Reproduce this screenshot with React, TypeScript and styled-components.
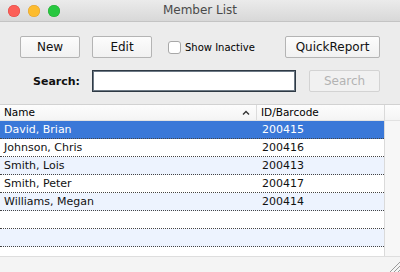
import React from "react";
import styled, { createGlobalStyle } from "styled-components";

const GlobalStyle = createGlobalStyle`
  html, body {
    margin: 0;
    padding: 0;
    background: #ececec;
  }
  body {
    font-family: "DejaVu Sans", "Liberation Sans", sans-serif;
    color: #1a1a1a;
  }
`;

const Window = styled.div`
  width: 400px;
  height: 272px;
  display: flex;
  flex-direction: column;
  background: #ececec;
  overflow: hidden;
`;

const TitleBar = styled.div`
  height: 21px;
  flex: none;
  display: flex;
  align-items: center;
  position: relative;
  background: linear-gradient(#ebebeb, #d8d8d8);
  border-bottom: 1px solid #c4c4c4;
`;

const Lights = styled.div`
  display: flex;
  gap: 8px;
  padding-left: 8px;
  padding-top: 1px;
`;

const Light = styled.span<{ $color: string; $edge: string }>`
  width: 12px;
  height: 12px;
  border-radius: 50%;
  background: ${(p) => p.$color};
  box-shadow: inset 0 0 0 0.5px ${(p) => p.$edge};
`;

const Title = styled.div`
  position: absolute;
  left: 0;
  right: 0;
  top: 0;
  line-height: 21px;
  text-align: center;
  font-size: 12px;
  color: #4a4a4a;
  pointer-events: none;
`;

const Toolbar = styled.div`
  display: flex;
  flex-direction: column;
  padding: 14px 20px 0 20px;
  gap: 12px;
  height: 82px;
  box-sizing: border-box;
  flex: none;
`;

const Row = styled.div`
  display: flex;
  align-items: center;
  height: 22px;
`;

const Button = styled.button<{ $w: number; $disabled?: boolean }>`
  width: ${(p) => p.$w}px;
  height: 22px;
  box-sizing: border-box;
  border: 1px solid ${(p) => (p.$disabled ? "#d3d3d3" : "#b4b4b4")};
  border-radius: 2px;
  background: ${(p) =>
    p.$disabled ? "#f1f1f1" : "linear-gradient(#fcfcfc, #f1f1f1)"};
  color: ${(p) => (p.$disabled ? "#b3b3b3" : "#111")};
  font-family: "DejaVu Sans", sans-serif;
  font-size: 12px;
  padding: 0;
  margin: 0;
`;

const Check = styled.span`
  width: 13px;
  height: 13px;
  box-sizing: border-box;
  border: 1px solid #a8a8a8;
  border-radius: 3px;
  background: #fff;
  margin-left: 16px;
`;

const CheckLabel = styled.span`
  font-size: 10px;
  margin-left: 4px;
  color: #000;
`;

const Spacer = styled.div`
  flex: 1;
`;

const SearchLabel = styled.label`
  width: 60px;
  text-align: right;
  font-weight: bold;
  font-size: 11px;
  color: #111;
  margin-right: 12px;
`;

const Input = styled.div`
  width: 204px;
  height: 22px;
  box-sizing: border-box;
  border: 1px solid #2f3a45;
  box-shadow: inset 0 0 0 1px #6d7985;
  background: #fff;
  margin-right: 13px;
`;

const Table = styled.div`
  flex: 1;
  display: flex;
  flex-direction: column;
  border-top: 1px solid #d2d2d2;
`;

const Body = styled.div`
  flex: 1;
  display: grid;
  grid-template-columns: 385px 1fr;
`;

const Columns = styled.div`
  background: #fff;
  border-right: 1px solid #dadada;
  display: flex;
  flex-direction: column;
`;

const Header = styled.div`
  height: 15px;
  display: grid;
  grid-template-columns: 257px 1fr;
  background: linear-gradient(#fdfdfd, #f4f4f4);
  border-bottom: 1px solid #e2e2e2;
  font-size: 10.5px;
  line-height: 15px;
  color: #000;
`;

const HeadCell = styled.div<{ $sep?: boolean }>`
  padding-left: 4px;
  display: flex;
  align-items: center;
  justify-content: space-between;
  border-right: ${(p) => (p.$sep ? "1px solid #dcdcdc" : "none")};
`;

const SortMark = styled.svg`
  margin-right: 6px;
`;

const DataRow = styled.div<{ $selected?: boolean; $alt?: boolean }>`
  height: 17px;
  display: grid;
  grid-template-columns: 258px 1fr;
  font-size: 11px;
  line-height: 17px;
  background: ${(p) => (p.$selected ? "#3a78d8" : p.$alt ? "#edf3fe" : "#fff")};
  color: ${(p) => (p.$selected ? "#fff" : "#111")};
  border-bottom: 1px dotted #444;
`;

const Cell = styled.div`
  padding-left: 4px;
  white-space: nowrap;
`;

const Scroller = styled.div`
  background: #f7f7f7;
  display: flex;
  flex-direction: column;
`;

const ScrollHead = styled.div`
  height: 15px;
  background: linear-gradient(#fdfdfd, #f4f4f4);
  border-bottom: 1px solid #e2e2e2;
`;

const Footer = styled.div`
  height: 15px;
  flex: none;
  background: #f4f4f4;
  border-top: 1px solid #dedede;
  display: flex;
  justify-content: flex-end;
  align-items: flex-end;
`;

const members = [
  { name: "David, Brian", id: "200415" },
  { name: "Johnson, Chris", id: "200416" },
  { name: "Smith, Lois", id: "200413" },
  { name: "Smith, Peter", id: "200417" },
  { name: "Williams, Megan", id: "200414" },
  { name: "", id: "" },
  { name: "", id: "" },
];

function Grip() {
  return (
    <svg width="11" height="11" viewBox="0 0 11 11">
      <path d="M1 11 L11 1 M5 11 L11 5 M9 11 L11 9" stroke="#9a9a9a" strokeWidth="1" />
    </svg>
  );
}

export default function App() {
  return (
    <Window>
      <GlobalStyle />
      <TitleBar>
        <Lights>
          <Light $color="#fc5f57" $edge="#df4744" />
          <Light $color="#fdbc2e" $edge="#de9f34" />
          <Light $color="#28c840" $edge="#27aa35" />
        </Lights>
        <Title>Member List</Title>
      </TitleBar>
      <Toolbar>
        <Row>
          <Button $w={60}>New</Button>
          <Button $w={60} style={{ marginLeft: 12 }}>Edit</Button>
          <Check />
          <CheckLabel>Show Inactive</CheckLabel>
          <Spacer />
          <Button $w={95}>QuickReport</Button>
        </Row>
        <Row>
          <SearchLabel>Search:</SearchLabel>
          <Input />
          <Button $w={71} $disabled>Search</Button>
        </Row>
      </Toolbar>
      <Table>
        <Body>
          <Columns>
            <Header>
              <HeadCell $sep>
                <span>Name</span>
                <SortMark width="8" height="5" viewBox="0 0 8 5">
                  <path d="M1 4.5 L4 1.5 L7 4.5" fill="none" stroke="#333" strokeWidth="1.4" />
                </SortMark>
              </HeadCell>
              <HeadCell>ID/Barcode</HeadCell>
            </Header>
            {members.map((m, i) => (
              <DataRow key={i} $selected={i === 0} $alt={i % 2 === 0}>
                <Cell>{m.name}</Cell>
                <Cell>{m.id}</Cell>
              </DataRow>
            ))}
          </Columns>
          <Scroller>
            <ScrollHead />
          </Scroller>
        </Body>
        <Footer>
          <Grip />
        </Footer>
      </Table>
    </Window>
  );
}
